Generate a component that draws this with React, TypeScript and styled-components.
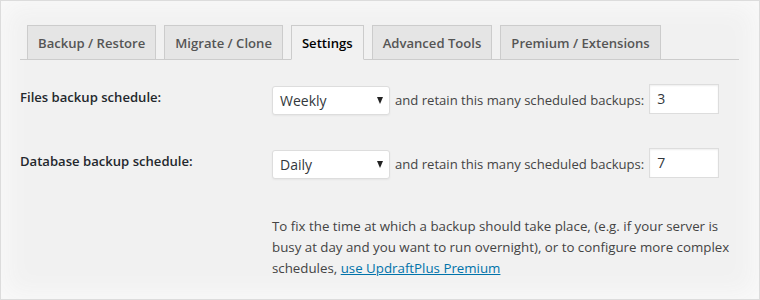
import React from "react";
import styled, { createGlobalStyle } from "styled-components";

const Global = createGlobalStyle`
  html, body { margin: 0; padding: 0; background: #f1f1f1; }
  * { box-sizing: border-box; }
`;

const Frame = styled.div`
  width: 760px;
  height: 300px;
  border: 1px solid #dcdcdc;
  background: #f1f1f1;
  box-shadow: inset 0 0 24px 6px #f9f9f9;
  padding: 24px 20px 0 19px;
  font-family: "Open Sans", "Noto Sans", sans-serif;
  font-size: 13px;
  color: #444;
  overflow: hidden;
`;

const TabBar = styled.nav`
  display: flex;
  border-bottom: 1px solid #ccc;
  padding-left: 7px;
  gap: 8px;
`;

const Tab = styled.div<{ $active?: boolean }>`
  height: 35px;
  margin-bottom: -1px;
  display: flex;
  align-items: center;
  padding: 0 10px;
  border: 1px solid #ccc;
  border-bottom-color: ${(p) => (p.$active ? "#f1f1f1" : "#ccc")};
  background: ${(p) => (p.$active ? "#f1f1f1" : "#e5e5e5")};
  color: ${(p) => (p.$active ? "#000" : "#555")};
  font-weight: 600;
  font-size: 13.1px;
  white-space: nowrap;
`;

const Form = styled.div`
  display: grid;
  grid-template-columns: 252px 1fr;
  row-gap: 0;
  padding-top: 23px;
`;

const Label = styled.div`
  font-weight: 600;
  color: #23282d;
  font-size: 13.1px;
  height: 64px;
  padding-top: 5px;
`;

const Controls = styled.div`
  display: flex;
  align-items: center;
  gap: 5px;
  height: 34px;
  color: #444;
  font-size: 13.1px;
`;

const SelectBox = styled.div`
  width: 118px;
  height: 29px;
  display: flex;
  align-items: center;
  justify-content: space-between;
  padding: 0 6px 0 7px;
  background: #fff;
  border: 1px solid #ddd;
  border-radius: 3px;
  box-shadow: 0 1px 2px rgba(0, 0, 0, 0.05);
  color: #32373c;
  font-size: 14px;
`;

const Arrow = styled.span`
  width: 0;
  height: 0;
  border-left: 3.5px solid transparent;
  border-right: 3.5px solid transparent;
  border-top: 7px solid #222;
`;

const NumberBox = styled.div`
  width: 70px;
  height: 30px;
  display: flex;
  align-items: center;
  padding-left: 7px;
  background: #fff;
  border: 1px solid #ddd;
  box-shadow: inset 0 1px 2px rgba(0, 0, 0, 0.07);
  color: #32373c;
  font-size: 14px;
  margin-top: -3px;
`;

const Note = styled.p`
  grid-column: 2;
  margin: 0;
  padding-top: 5px;
  width: 470px;
  line-height: 21px;
  font-size: 13.3px;
  color: #444;
`;

const Link = styled.a`
  color: #0073aa;
  text-decoration: underline;
`;

const rows = [
  { label: "Files backup schedule:", freq: "Weekly", keep: "3" },
  { label: "Database backup schedule:", freq: "Daily", keep: "7" },
];

export default function App() {
  return (
    <>
      <Global />
      <Frame>
        <TabBar>
          <Tab>Backup / Restore</Tab>
          <Tab>Migrate / Clone</Tab>
          <Tab $active>Settings</Tab>
          <Tab>Advanced Tools</Tab>
          <Tab>Premium / Extensions</Tab>
        </TabBar>
        <Form>
          {rows.map((r) => (
            <React.Fragment key={r.label}>
              <Label>{r.label}</Label>
              <Controls>
                <SelectBox>
                  <span>{r.freq}</span>
                  <Arrow />
                </SelectBox>
                <span>and retain this many scheduled backups:</span>
                <NumberBox>{r.keep}</NumberBox>
              </Controls>
            </React.Fragment>
          ))}
          <Note>
            To fix the time at which a backup should take place, (e.g. if your server is busy at day and you
            want to run overnight), or to configure more complex schedules,{" "}
            <Link href="#">use UpdraftPlus Premium</Link>
          </Note>
        </Form>
      </Frame>
    </>
  );
}
